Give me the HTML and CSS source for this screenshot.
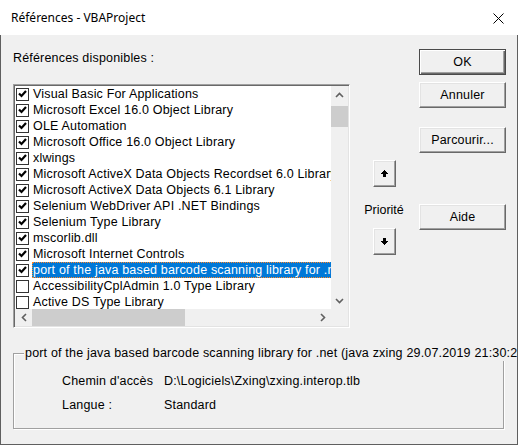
FILE: index.html
```html
<!DOCTYPE html>
<html lang="fr">
<head>
<meta charset="utf-8">
<title>Références - VBAProject</title>
<link rel="stylesheet" href="styles.css">
</head>
<body>
<div class="window">
  <div class="titlebar">
    <span class="title">Références - VBAProject</span>
    <svg class="close" width="11" height="11" viewBox="0 0 11 11"><path d="M0.5 0.5L10.5 10.5M10.5 0.5L0.5 10.5" stroke="#000" stroke-width="1" fill="none"/></svg>
  </div>
  <div class="content">
    <div class="main">
      <div class="left">
        <div class="label">Références disponibles :</div>
        <div class="listbox">
          <div class="viewport">
            <div class="row"><span class="cb"><svg width="11" height="11" viewBox="0 0 11 11"><polyline points="2,4.5 4.5,7 9,2" fill="none" stroke="#000" stroke-width="2.2"/></svg></span><span class="txt">Visual Basic For Applications</span></div>
            <div class="row"><span class="cb"><svg width="11" height="11" viewBox="0 0 11 11"><polyline points="2,4.5 4.5,7 9,2" fill="none" stroke="#000" stroke-width="2.2"/></svg></span><span class="txt">Microsoft Excel 16.0 Object Library</span></div>
            <div class="row"><span class="cb"><svg width="11" height="11" viewBox="0 0 11 11"><polyline points="2,4.5 4.5,7 9,2" fill="none" stroke="#000" stroke-width="2.2"/></svg></span><span class="txt">OLE Automation</span></div>
            <div class="row"><span class="cb"><svg width="11" height="11" viewBox="0 0 11 11"><polyline points="2,4.5 4.5,7 9,2" fill="none" stroke="#000" stroke-width="2.2"/></svg></span><span class="txt">Microsoft Office 16.0 Object Library</span></div>
            <div class="row"><span class="cb"><svg width="11" height="11" viewBox="0 0 11 11"><polyline points="2,4.5 4.5,7 9,2" fill="none" stroke="#000" stroke-width="2.2"/></svg></span><span class="txt">xlwings</span></div>
            <div class="row"><span class="cb"><svg width="11" height="11" viewBox="0 0 11 11"><polyline points="2,4.5 4.5,7 9,2" fill="none" stroke="#000" stroke-width="2.2"/></svg></span><span class="txt">Microsoft ActiveX Data Objects Recordset 6.0 Library</span></div>
            <div class="row"><span class="cb"><svg width="11" height="11" viewBox="0 0 11 11"><polyline points="2,4.5 4.5,7 9,2" fill="none" stroke="#000" stroke-width="2.2"/></svg></span><span class="txt">Microsoft ActiveX Data Objects 6.1 Library</span></div>
            <div class="row"><span class="cb"><svg width="11" height="11" viewBox="0 0 11 11"><polyline points="2,4.5 4.5,7 9,2" fill="none" stroke="#000" stroke-width="2.2"/></svg></span><span class="txt">Selenium WebDriver API .NET Bindings</span></div>
            <div class="row"><span class="cb"><svg width="11" height="11" viewBox="0 0 11 11"><polyline points="2,4.5 4.5,7 9,2" fill="none" stroke="#000" stroke-width="2.2"/></svg></span><span class="txt">Selenium Type Library</span></div>
            <div class="row"><span class="cb"><svg width="11" height="11" viewBox="0 0 11 11"><polyline points="2,4.5 4.5,7 9,2" fill="none" stroke="#000" stroke-width="2.2"/></svg></span><span class="txt">mscorlib.dll</span></div>
            <div class="row"><span class="cb"><svg width="11" height="11" viewBox="0 0 11 11"><polyline points="2,4.5 4.5,7 9,2" fill="none" stroke="#000" stroke-width="2.2"/></svg></span><span class="txt">Microsoft Internet Controls</span></div>
            <div class="row sel"><span class="cb"><svg width="11" height="11" viewBox="0 0 11 11"><polyline points="2,4.5 4.5,7 9,2" fill="none" stroke="#000" stroke-width="2.2"/></svg></span><span class="txt">port of the java based barcode scanning library for .net (java zxing 29.07.2019 21:30:24)</span></div>
            <div class="row"><span class="cb"></span><span class="txt">AccessibilityCplAdmin 1.0 Type Library</span></div>
            <div class="row"><span class="cb"></span><span class="txt">Active DS Type Library</span></div>
            <div class="row"><span class="cb"></span><span class="txt">Adobe Acrobat 10.0 Type Library</span></div>
          </div>
          <div class="vscroll">
            <div class="sbtn"><svg width="9" height="6" viewBox="0 0 9 6"><polyline points="1,5 4.5,1.5 8,5" fill="none" stroke="#606060" stroke-width="1.6"/></svg></div>
            <div class="vthumb"></div>
            <div class="track"></div>
            <div class="sbtn"><svg width="9" height="6" viewBox="0 0 9 6"><polyline points="1,1 4.5,4.5 8,1" fill="none" stroke="#606060" stroke-width="1.6"/></svg></div>
          </div>
          <div class="hscroll">
            <div class="sbtn"><svg width="6" height="9" viewBox="0 0 6 9"><polyline points="5,1 1.5,4.5 5,8" fill="none" stroke="#606060" stroke-width="1.6"/></svg></div>
            <div class="hthumb"></div>
            <div class="track"></div>
            <div class="sbtn"><svg width="6" height="9" viewBox="0 0 6 9"><polyline points="1,1 4.5,4.5 1,8" fill="none" stroke="#606060" stroke-width="1.6"/></svg></div>
          </div>
          <div class="corner"></div>
        </div>
      </div>
      <div class="mid">
        <div class="btn arrow"><svg width="7" height="7" viewBox="0 0 7 7" shape-rendering="crispEdges"><path d="M3 0h1v1h-1z M2 1h3v1h-3z M1 2h5v1h-5z M0 3h7v1h-7z M2 4h3v3h-3z" fill="#000"/></svg></div>
        <div class="prio">Priorité</div>
        <div class="btn arrow"><svg width="7" height="7" viewBox="0 0 7 7" shape-rendering="crispEdges"><path d="M2 0h3v3h-3z M0 3h7v1h-7z M1 4h5v1h-5z M2 5h3v1h-3z M3 6h1v1h-1z" fill="#000"/></svg></div>
      </div>
      <div class="right">
        <div class="btn default">OK</div>
        <div class="btn b-annuler">Annuler</div>
        <div class="btn b-parcourir">Parcourir...</div>
        <div class="btn b-aide">Aide</div>
      </div>
    </div>
    <div class="group">
      <div class="legend">port of the java based barcode scanning library for .net (java zxing 29.07.2019 21:30:24)</div>
      <div class="props">
        <span>Chemin d'accès</span><span>D:\Logiciels\Zxing\zxing.interop.tlb</span>
        <span>Langue :</span><span>Standard</span>
      </div>
    </div>
  </div>
</div>
</body>
</html>
```

FILE: styles.css
```css
body {
  margin: 0;
  background: #fff;
}

.window {
  width: 518px;
  height: 445px;
  display: flex;
  flex-direction: column;
  font-family: "Liberation Sans", Arial, sans-serif;
  font-size: 12.5px;
  letter-spacing: 0.18px;
  color: #000;
  overflow: hidden;
}

.titlebar {
  flex: none;
  height: 35px;
  box-sizing: border-box;
  background: #fff;
  display: flex;
  align-items: center;
  justify-content: space-between;
  padding: 0 14px 0 11px;
  font-family: "Noto Sans", sans-serif;
  font-size: 12px;
  letter-spacing: 0;
}

.close {
  display: block;
  margin-top: 1px;
}

.content {
  flex: 1;
  min-height: 0;
  background: #f0f0f0;
  border: 1px solid #5f5f5f;
  border-top: none;
  overflow: hidden;
}

.main {
  display: flex;
  align-items: flex-start;
  padding: 14px 0 0 12px;
}

.left {
  width: 337px;
  flex: none;
}

.label {
  height: 18px;
  line-height: 18px;
}

.listbox {
  margin-top: 17px;
  height: 244px;
  box-sizing: border-box;
  border: 1px solid;
  border-color: #a0a0a0 #fff #fff #a0a0a0;
  box-shadow: inset 1px 1px 0 #696969, inset -1px -1px 0 #e3e3e3;
  padding: 1px;
  display: grid;
  grid-template-columns: 1fr 17px;
  grid-template-rows: 1fr 17px;
}

.viewport {
  background: #fff;
  overflow: hidden;
  min-width: 0;
}

.row {
  display: flex;
  align-items: flex-start;
  height: 16px;
}

.cb {
  flex: none;
  width: 13px;
  height: 13px;
  box-sizing: border-box;
  border: 1px solid #333;
  background: #fff;
  margin: 2px 3px 0 1px;
}

.cb svg {
  display: block;
}

.txt {
  flex: 1;
  white-space: nowrap;
  line-height: 16px;
  padding: 0 1px;
}

.sel .txt {
  background: #0078d7;
  color: #fff;
  outline: 1px dotted #ff8728;
  outline-offset: -1px;
}

.vscroll {
  background: #f0f0f0;
  display: flex;
  flex-direction: column;
}

.hscroll {
  background: #f0f0f0;
  display: flex;
}

.corner {
  background: #f0f0f0;
}

.sbtn {
  flex: none;
  width: 17px;
  height: 17px;
  display: flex;
  align-items: center;
  justify-content: center;
}

.sbtn svg {
  display: block;
}

.track {
  flex: 1;
}

.vthumb {
  margin-top: 3px;
  height: 21px;
  background: #cdcdcd;
}

.hthumb {
  width: 153px;
  background: #cdcdcd;
}

.mid {
  width: 40px;
  flex: none;
  margin-left: 14px;
  padding-top: 111px;
  display: flex;
  flex-direction: column;
  align-items: center;
}

.prio {
  line-height: 16px;
  margin: 15px 0 10px;
  white-space: nowrap;
  letter-spacing: 0;
}

.right {
  width: 87px;
  flex: none;
  margin-left: 15px;
  display: flex;
  flex-direction: column;
}

.btn {
  box-sizing: border-box;
  height: 26px;
  width: 87px;
  background: #f0f0f0;
  border: 1px solid;
  border-color: #fff #696969 #696969 #fff;
  box-shadow: inset -1px -1px 0 #a0a0a0, inset 1px 1px 0 #e3e3e3;
  display: flex;
  align-items: center;
  justify-content: center;
  white-space: nowrap;
}

.btn.default {
  border-color: #4a4a4a;
  box-shadow: inset 1px 1px 0 #fff, inset -1px -1px 0 #696969, inset -2px -2px 0 #a0a0a0;
}

.b-annuler {
  margin-top: 7px;
}

.b-parcourir {
  margin-top: 19px;
}

.b-aide {
  margin-top: 51px;
}

.btn.arrow {
  width: 23px;
  height: 27px;
}

.btn.arrow svg {
  display: block;
}

.group {
  position: relative;
  margin: 25px 0 0 12px;
  width: 491px;
  height: 76px;
  box-sizing: border-box;
  border: 1px solid #a0a0a0;
  box-shadow: 1px 1px 0 #fff, inset 1px 1px 0 #fff;
}

.legend {
  position: absolute;
  left: 10px;
  top: -9px;
  padding: 0 1px;
  line-height: 16px;
  background: #f0f0f0;
  white-space: nowrap;
}

.props {
  display: grid;
  grid-template-columns: 102px auto;
  row-gap: 8px;
  padding: 19px 0 0 48px;
  line-height: 16px;
}
```
